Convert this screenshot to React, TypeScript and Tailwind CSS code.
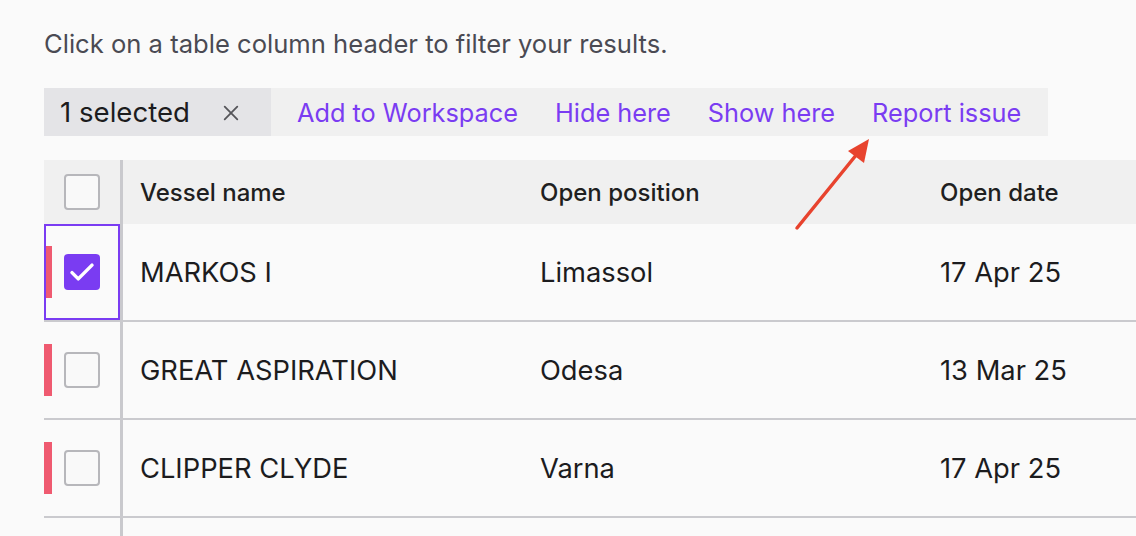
import React from 'react';

type Vessel = { name: string; position: string; date: string; selected?: boolean };

const vessels: Vessel[] = [
  { name: 'MARKOS I', position: 'Limassol', date: '17 Apr 25', selected: true },
  { name: 'GREAT ASPIRATION', position: 'Odesa', date: '13 Mar 25' },
  { name: 'CLIPPER CLYDE', position: 'Varna', date: '17 Apr 25' },
];

const Checkbox: React.FC<{ checked?: boolean }> = ({ checked }) =>
  checked ? (
    <div className="flex h-[36px] w-[36px] items-center justify-center rounded-[4px] bg-[#7a3cf2]">
      <svg viewBox="0 0 24 24" className="h-[30px] w-[30px]" fill="none" stroke="white" strokeWidth={2.8} strokeLinecap="round" strokeLinejoin="round">
        <path d="M4 12.5l5 5L20 6.5" />
      </svg>
    </div>
  ) : (
    <div className="h-[36px] w-[36px] rounded-[4px] border-2 border-[#b7b7bb] bg-[#f9f9f9]" />
  );

export default function App() {
  return (
    <div className="relative min-h-screen overflow-hidden bg-[#fafafa] pl-[44px] pt-[28px] font-['Inter',sans-serif]">
      <p className="text-[25.6px] leading-[32px] text-[#4a4a53]">
        Click on a table column header to filter your results.
      </p>

      <div className="mt-[28px] flex h-[48px] w-[1004px] items-stretch bg-[#f0f0f0] text-[25.3px]">
        <div className="flex w-[227px] items-center justify-between bg-[#e4e4e7] pl-[16px] pr-[31px] pt-[2px] text-[#1c1c1e]">
          <span className="text-[27.6px]">1 selected</span>
          <svg viewBox="0 0 20 20" className="h-[18px] w-[18px]" stroke="#55555a" strokeWidth={2} strokeLinecap="round">
            <path d="M3 3l14 14M17 3L3 17" />
          </svg>
        </div>
        <div className="flex items-center gap-[37px] pl-[26px] pt-[2px] text-[#7a3cf2]">
          <span>Add to Workspace</span>
          <span>Hide here</span>
          <span>Show here</span>
          <span>Report issue</span>
        </div>
      </div>

      <div className="mt-[24px]">
        <div className="flex h-[64px] bg-[#f0f0f0]">
          <div className="flex w-[76px] items-center pl-[20px]">
            <Checkbox />
          </div>
          <div className="flex flex-1 items-center border-l-[3px] border-[#c9c9cd] pt-[1px] text-[24px] font-medium text-[#1f1f21]">
            <div className="w-[400px] pl-[17px]">Vessel name</div>
            <div className="w-[400px] pl-[17px]">Open position</div>
            <div className="pl-[17px]">Open date</div>
          </div>
        </div>

        {vessels.map((v) => (
          <div key={v.name} className="flex h-[98px] border-b-2 border-[#cacace]">
            <div
              className={`flex w-[76px] items-center ${
                v.selected ? 'outline-2 -outline-offset-2 outline-[#7a3cf2]' : ''
              }`}
            >
              <div className="h-[52px] w-[8px] bg-[#ef5a70]" />
              <div className="ml-[12px]">
                <Checkbox checked={v.selected} />
              </div>
            </div>
            <div className="flex flex-1 items-center border-l-[3px] border-[#c9c9cd] pt-[2px] text-[27.3px] text-[#1c1c1e]">
              <div className="w-[400px] pl-[17px]">{v.name}</div>
              <div className="w-[400px] pl-[17px]">{v.position}</div>
              <div className="pl-[17px]">{v.date}</div>
            </div>
          </div>
        ))}

        <div className="flex h-[40px]">
          <div className="w-[76px]" />
          <div className="flex-1 border-l-[3px] border-[#c9c9cd]" />
        </div>
      </div>

      <svg className="pointer-events-none absolute left-0 top-0" width="1136" height="536" viewBox="0 0 1136 536">
        <line x1="797" y1="228" x2="857" y2="154" stroke="#e8432e" strokeWidth={3.5} strokeLinecap="round" />
        <path d="M869 139 L848 151 L864 163 Z" fill="#e8432e" />
      </svg>
    </div>
  );
}
